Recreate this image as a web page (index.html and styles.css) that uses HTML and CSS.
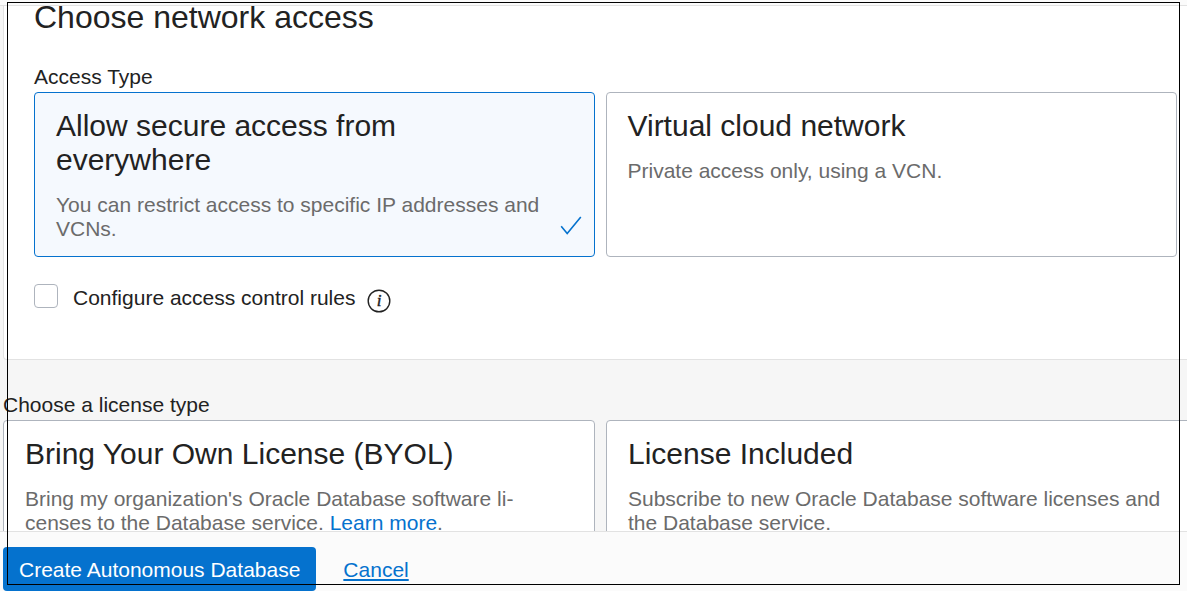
FILE: index.html
```html
<!DOCTYPE html>
<html lang="en">
<head>
<meta charset="utf-8">
<title>Create Autonomous Database</title>
<link rel="stylesheet" href="styles.css">
</head>
<body>
<form class="page">
  <div class="topbar"></div>
  <main class="viewport">
    <div class="content">
      <section class="panel">
        <h2 class="panel-title">Choose network access</h2>
        <div class="caption" id="access-label">Access Type</div>
        <div class="cards cards-network" role="radiogroup" aria-labelledby="access-label">
          <label class="card">
            <input class="card-radio" type="radio" name="access" checked>
            <span class="card-title">Allow secure access from everywhere</span>
            <span class="card-text">You can restrict access to specific IP addresses and VCNs.</span>
            <svg class="card-check" viewBox="0 0 22 20" aria-hidden="true"><path d="M1.2 10.2 L7.2 17.5 L20.8 1"/></svg>
          </label>
          <label class="card">
            <input class="card-radio" type="radio" name="access">
            <span class="card-title">Virtual cloud network</span>
            <span class="card-text">Private access only, using a VCN.</span>
          </label>
        </div>
        <div class="option">
          <input class="checkbox" type="checkbox" id="acl">
          <label for="acl">Configure access control rules</label>
          <button class="info" type="button" aria-label="More information">
            <svg viewBox="0 0 24 24" aria-hidden="true"><circle cx="12" cy="12" r="10.8"/><text x="12" y="17" text-anchor="middle">i</text></svg>
          </button>
        </div>
      </section>
      <section class="license">
        <div class="caption" id="license-label">Choose a license type</div>
        <div class="cards" role="radiogroup" aria-labelledby="license-label">
          <label class="card">
            <input class="card-radio" type="radio" name="license">
            <span class="card-title">Bring Your Own License (BYOL)</span>
            <span class="card-text">Bring my organization's Oracle Database software li&shy;censes to the Database service. <a class="link" href="#learn">Learn more</a>.</span>
          </label>
          <label class="card">
            <input class="card-radio" type="radio" name="license">
            <span class="card-title">License Included</span>
            <span class="card-text">Subscribe to new Oracle Database software licenses and the Database service.</span>
          </label>
        </div>
      </section>
    </div>
  </main>
  <footer class="actions">
    <button class="primary" type="submit">Create Autonomous Database</button>
    <a class="cancel" href="#cancel">Cancel</a>
  </footer>
</form>
<div class="frame"></div>
</body>
</html>
```
FILE: styles.css
```css
* {
  box-sizing: border-box;
}

body {
  margin: 0;
  font: 21px/24px "Liberation Sans", Arial, sans-serif;
  color: #222;
  background: #f6f6f6;
  overflow: hidden;
}

.page {
  display: flex;
  flex-direction: column;
  height: 100vh;
}

.topbar {
  flex: none;
  height: 6px;
  background: #fbfbfb;
  border-bottom: 1px solid #e2e2e2;
}

.viewport {
  flex: 1;
  min-height: 0;
  overflow: hidden;
}

/* The form is scrolled part of the way down and runs past the right edge. */
.content {
  margin: -6px -11px 0 3px;
}

.panel {
  padding: 0 20px 46px 30px;
  background: #fff;
  border: 1px solid #e2e2e2;
  border-top: 0;
  border-radius: 0 0 4px 4px;
}

.panel-title {
  margin: 0 0 31px;
  font-size: 32px;
  line-height: 34px;
  font-weight: 400;
}

.caption {
  margin-bottom: 3px;
}

.cards {
  display: grid;
  grid-template-columns: 1fr 1fr;
  gap: 11px;
}

.cards-network {
  grid-template-columns: calc(50% - 11px) 1fr;
}

.card {
  position: relative;
  display: block;
  padding: 16px 32px 15px 21px;
  background: #fff;
  border: 1px solid #aeb4bd;
  border-radius: 4px;
  cursor: pointer;
}

.card:has(:checked) {
  padding-right: 48px;
  background: #f5f9fe;
  border-color: #0572ce;
}

.card-radio {
  position: absolute;
  margin: 0;
  opacity: 0;
}

.card-title {
  display: block;
  margin-bottom: 16px;
  font-size: 30px;
  line-height: 34px;
}

.card-text {
  display: block;
  color: #6b6b6b;
}

.card-check {
  position: absolute;
  right: 12px;
  bottom: 20px;
  width: 22px;
  height: 20px;
  fill: none;
  stroke: #0572ce;
  stroke-width: 1.6;
}

.link {
  color: #0572ce;
  text-decoration: none;
}

.option {
  display: flex;
  align-items: flex-start;
  margin-top: 27px;
}

.checkbox {
  appearance: none;
  width: 24px;
  height: 24px;
  margin: 0 15px 0 0;
  background: #fff;
  border: 1px solid #aeb4bd;
  border-radius: 4px;
}

.option label {
  padding-top: 2px;
}

.info {
  width: 24px;
  height: 24px;
  margin: 5px 0 0 12px;
  padding: 0;
  background: none;
  border: 0;
}

.info svg {
  display: block;
}

.info circle {
  fill: none;
  stroke: #222;
  stroke-width: 1.4;
}

.info text {
  fill: #222;
  stroke: #222;
  stroke-width: 0.4;
  font: italic 17px "Liberation Serif", serif;
}

.license {
  padding-top: 33px;
}

.actions {
  flex: none;
  display: flex;
  align-items: center;
  gap: 27px;
  padding: 15px 3px 0;
  background: #fbfbfb;
  border-top: 1px solid #e2e2e2;
}

.primary {
  height: 44px;
  padding: 2px 16px 0;
  font: inherit;
  color: #fff;
  background: #0572ce;
  border: 0;
  border-radius: 4px;
}

.cancel {
  padding-top: 2px;
  color: #0572ce;
  text-decoration: underline;
  text-decoration-thickness: 2px;
  text-underline-offset: 2px;
}

.frame {
  position: fixed;
  inset: 2px 7px 6px;
  border: 1px solid #000;
  pointer-events: none;
}
```
